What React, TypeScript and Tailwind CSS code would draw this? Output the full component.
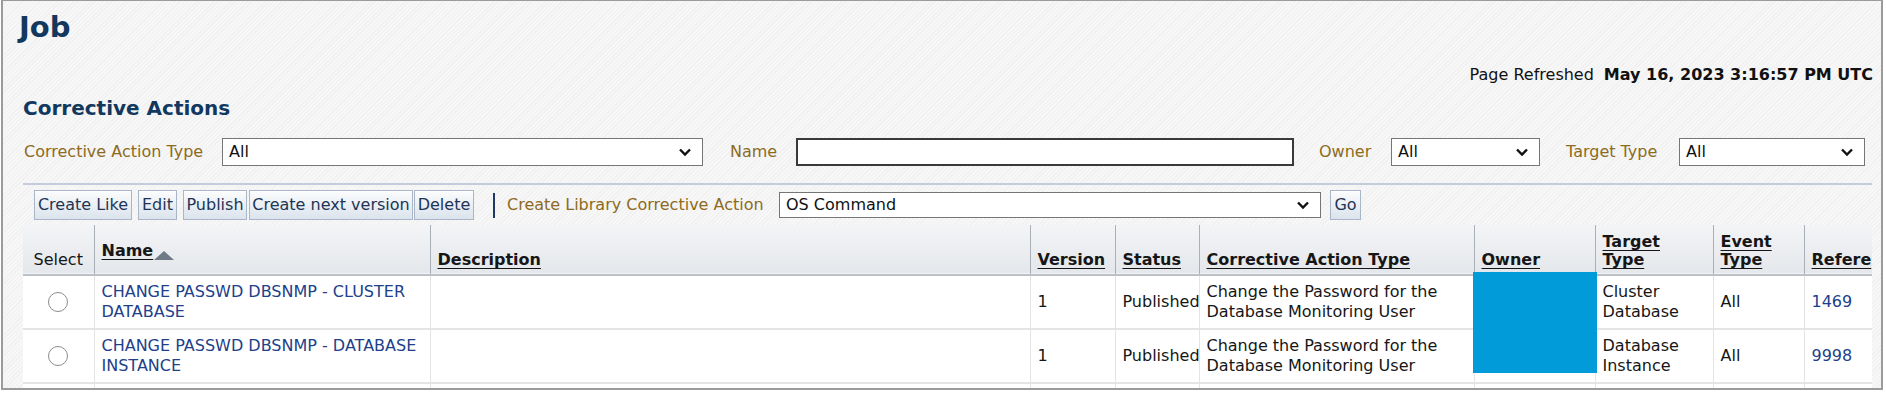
import React from "react";

const font = "font-['DejaVu_Sans',sans-serif]";

const Chevron = () => (
  <svg width="14" height="10" viewBox="0 0 14 10" className="shrink-0">
    <path d="M2 2.5 L7 7.5 L12 2.5" fill="none" stroke="#111" strokeWidth="2.4" />
  </svg>
);

const Select = ({ value, width }: { value: string; width: string }) => (
  <div
    className={`${width} h-full flex items-center justify-between bg-white border border-[#767676] pl-[6px] pr-[10px] text-[16px] text-[#111]`}
  >
    <span>{value}</span>
    <Chevron />
  </div>
);

const Button = ({ label, width }: { label: string; width: string }) => (
  <div
    className={`${width} h-full flex items-center justify-center whitespace-nowrap border border-[#a9b6c6] bg-[linear-gradient(#fbfcfd,#dbe3ec)] text-[16px] text-[#1e3556] shadow-[inset_0_1px_0_#fff]`}
  >
    {label}
  </div>
);

const SortUp = () => (
  <svg width="20" height="10" viewBox="0 0 20 10" className="inline-block ml-[1px] mb-[-6px]">
    <path d="M0 10 L10 1 L20 10 Z" fill="#6f7a88" />
  </svg>
);

const Radio = () => (
  <div className="mx-auto w-[20px] h-[20px] rounded-full border border-[#8c8c8c] bg-white" />
);

type Row = {
  name: [string, string];
  type: [string, string];
  target: [string, string];
  ref: string;
};

const rows: Row[] = [
  {
    name: ["CHANGE PASSWD DBSNMP - CLUSTER", "DATABASE"],
    type: ["Change the Password for the", "Database Monitoring User"],
    target: ["Cluster", "Database"],
    ref: "1469",
  },
  {
    name: ["CHANGE PASSWD DBSNMP - DATABASE", "INSTANCE"],
    type: ["Change the Password for the", "Database Monitoring User"],
    target: ["Database", "Instance"],
    ref: "9998",
  },
];

const th =
  "align-bottom text-left font-bold underline underline-offset-[3px] px-[7px] pb-[5px] border-r border-[#aab0b8] leading-[18px] whitespace-nowrap";
const td =
  "align-middle px-[7px] border-r border-b-2 border-[#e4e4e4] leading-[20px] whitespace-nowrap overflow-visible";

export default function App() {
  return (
    <div className="w-[1886px] h-[393px] bg-white overflow-hidden">
      <div
        className={`${font} ml-px w-[1882px] h-[390px] border-x-2 border-t border-b-2 border-[#9b9b9b] bg-[repeating-linear-gradient(135deg,#f7f7f7_0px,#f7f7f7_2px,#f0f0f0_2px,#f0f0f0_3px)] overflow-hidden`}
      >
        <div className="h-[50px] flex items-center pt-[4px] pl-[16px] text-[29px] font-bold text-[#12385e]">
          Job
        </div>

        <div className="h-[48px] flex items-center justify-end pr-[8px] text-[16px] text-[#111]">
          <span>Page Refreshed</span>
          <span className="ml-[10px] font-bold">May 16, 2023 3:16:57 PM UTC</span>
        </div>

        <div className="h-[16px] flex items-center pt-[2px] pl-[20px] text-[20px] font-bold text-[#12385e]">
          Corrective Actions
        </div>

        <div className="mt-[23px] h-[28px] flex items-center pl-[21px] text-[16px] text-[#8d6b1e]">
          <span className="w-[198px] whitespace-nowrap">Corrective Action Type</span>
          <Select value="All" width="w-[481px]" />
          <span className="ml-[27px] w-[66px]">Name</span>
          <div className="w-[498px] h-full bg-white border-2 border-[#3a3a3a]" />
          <span className="ml-[25px] w-[72px]">Owner</span>
          <Select value="All" width="w-[149px]" />
          <span className="ml-[26px] w-[113px] whitespace-nowrap">Target Type</span>
          <Select value="All" width="w-[186px]" />
        </div>

        <div className="mt-[17px] ml-[20px] w-[1849px] h-[2px] bg-[#c3cdd9]" />

        <div className="mt-[5px] h-[30px] flex items-center pl-[31px]">
          <Button label="Create Like" width="w-[98px]" />
          <div className="ml-[6px] h-full flex">
            <Button label="Edit" width="w-[39px]" />
          </div>
          <div className="ml-[6px] h-full flex">
            <Button label="Publish" width="w-[64px]" />
          </div>
          <div className="ml-[2px] h-full flex">
            <Button label="Create next version" width="w-[164px]" />
          </div>
          <div className="ml-px h-full flex">
            <Button label="Delete" width="w-[60px]" />
          </div>
          <div className="ml-[19px] w-[2px] h-[25px] bg-[#1c3a63]" />
          <span className="ml-[12px] w-[272px] whitespace-nowrap text-[16px] text-[#8d6b1e]">
            Create Library Corrective Action
          </span>
          <div className="h-[26px] flex">
            <Select value="OS Command" width="w-[542px]" />
          </div>
          <div className="ml-[9px] h-full flex">
            <Button label="Go" width="w-[31px]" />
          </div>
        </div>

        <div className="relative mt-[5px] ml-[20px] w-[1849px] overflow-hidden">
          <table className="table-fixed border-collapse w-[1881px] text-[16px] text-[#161616]">
            <colgroup>
              <col className="w-[71px]" />
              <col className="w-[336px]" />
              <col className="w-[600px]" />
              <col className="w-[85px]" />
              <col className="w-[84px]" />
              <col className="w-[275px]" />
              <col className="w-[121px]" />
              <col className="w-[118px]" />
              <col className="w-[91px]" />
              <col className="w-[100px]" />
            </colgroup>
            <thead>
              <tr className="h-[50px] bg-[linear-gradient(#f3f4f6,#e4e7eb)] border-b-2 border-[#bcc1c8]">
                <th className="align-bottom text-center font-normal pb-[5px] border-r border-[#aab0b8] leading-[18px]">
                  Select
                </th>
                <th className={`${th} pb-[14px]`}>
                  Name
                  <SortUp />
                </th>
                <th className={th}>Description</th>
                <th className={th}>Version</th>
                <th className={th}>Status</th>
                <th className={th}>Corrective Action Type</th>
                <th className={th}>Owner</th>
                <th className={th}>
                  Target
                  <br />
                  Type
                </th>
                <th className={th}>
                  Event
                  <br />
                  Type
                </th>
                <th className={th}>Refere</th>
              </tr>
            </thead>
            <tbody className="bg-white">
              {rows.map((r) => (
                <tr key={r.ref} className="h-[54px]">
                  <td className={td}>
                    <Radio />
                  </td>
                  <td className={`${td} text-[#21408a]`}>
                    {r.name[0]}
                    <br />
                    {r.name[1]}
                  </td>
                  <td className={td}></td>
                  <td className={td}>1</td>
                  <td className={`${td} pr-0`}>Published</td>
                  <td className={td}>
                    {r.type[0]}
                    <br />
                    {r.type[1]}
                  </td>
                  <td className={td}></td>
                  <td className={td}>
                    {r.target[0]}
                    <br />
                    {r.target[1]}
                  </td>
                  <td className={td}>All</td>
                  <td className={`${td} text-[#21408a]`}>{r.ref}</td>
                </tr>
              ))}
              <tr className="h-[20px]">
                {Array.from({ length: 10 }).map((_, i) => (
                  <td key={i} className={td}></td>
                ))}
              </tr>
            </tbody>
          </table>
          <div className="absolute left-[1450px] top-[47px] w-[124px] h-[101px] bg-[#009bd8]" />
        </div>
      </div>
    </div>
  );
}
